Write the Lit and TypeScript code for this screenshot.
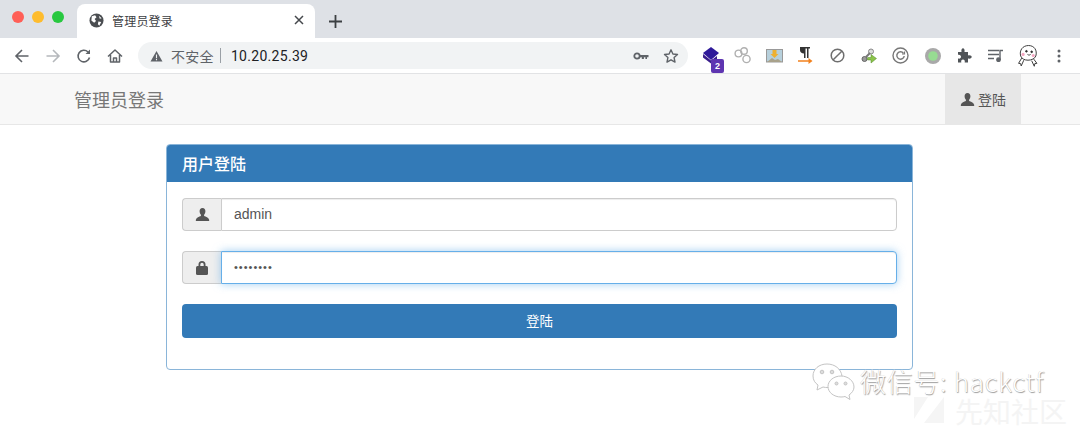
import { LitElement, html, css, svg } from "lit";
import { customElement } from "lit/decorators.js";

const person = svg`<path d="M8 1C5.900 1 4.900 2.600 4.900 4.600c0 1.500.6 2.800 1.400 3.600v1.300C4.500 10.400 1.600 11 .9 13.600V15h14.200v-1.400c-.7-2.600-3.600-3.200-5.400-4.100V8.200c.8-.8 1.400-2.100 1.400-3.600C11.100 2.600 10.100 1 8 1z"/>`;

@customElement("app-root")
export class AppRoot extends LitElement {
  static styles = css`
    :host {
      display: block;
      width: 1080px;
      height: 430px;
      position: relative;
      overflow: hidden;
      background: #fff;
      font-family: "Liberation Sans", "Noto Sans CJK SC", sans-serif;
      color: #555;
    }
    svg { display: block; }
    .tabstrip {
      height: 38px;
      background: #dee1e6;
      display: flex;
      align-items: flex-end;
      box-sizing: border-box;
      padding-left: 12px;
    }
    .lights { display: flex; gap: 8px; align-self: flex-start; margin-top: 11px; width: 64px; }
    .lights i { width: 12px; height: 12px; border-radius: 50%; display: block; }
    .tab {
      width: 238px;
      height: 34px;
      margin-left: 1px;
      box-sizing: border-box;
      background: #fff;
      border-radius: 8px 8px 0 0;
      display: flex;
      align-items: center;
      padding: 0 11px 2px 12px;
      font-size: 12px;
      color: #3c4043;
    }
    .tab .title { margin-left: 8px; flex: 1; font-family: "Noto Sans CJK SC", sans-serif; letter-spacing: 0.2px; }
    .plus { margin: 0 0 10px 14px; }
    .toolbar {
      background: #fff;
      display: flex;
      align-items: center;
      box-sizing: border-box;
      padding-left: 14px;
      border-bottom: 1px solid #e2e3e5;
      height: 36px;
    }
    .nav { display: flex; gap: 15px; align-items: center; width: 124px; }
    .omni {
      width: 550px;
      height: 27px;
      margin-right: 7px;
      border-radius: 14px;
      background: #f1f3f4;
      display: flex;
      align-items: center;
      padding-left: 12px;
      box-sizing: border-box;
    }
    .insecure { margin-left: 8px; font: 14px "Noto Sans CJK SC", sans-serif; color: #5f6368; letter-spacing: 0.3px; }
    .sep { width: 1px; height: 15px; background: #9aa0a6; margin: 0 10px 0 6px; }
    .url { font: 14px Roboto, sans-serif; color: #202124; letter-spacing: 0.3px; flex: 1; }
    .omni .key { margin-right: 14px; }
    .omni .star { margin-right: 9px; }
    .exts { display: flex; align-items: center; }
    .ext { width: 31.7px; display: flex; justify-content: center; align-items: center; position: relative; }
    .badge {
      position: absolute;
      left: 16px;
      top: 12px;
      width: 13px;
      height: 14px;
      border-radius: 2px;
      background: #5e35b1;
      color: #fff;
      font: bold 9px/14px "Liberation Sans", sans-serif;
      text-align: center;
    }
    .navbar {
      height: 51px;
      box-sizing: border-box;
      background: #f8f8f8;
      border-bottom: 1px solid #e7e7e7;
      display: flex;
      justify-content: space-between;
      padding: 0 59px 0 74px;
    }
    .brand { font: 18px/50px "Noto Sans CJK SC", sans-serif; color: #777; }
    .login-tab {
      width: 76px;
      background: #e7e7e7;
      display: flex;
      align-items: center;
      justify-content: center;
      gap: 3px;
      font: 14px "Noto Sans CJK SC", sans-serif;
      color: #555;
    }
    .main { padding: 19px 0 0 166px; }
    .panel {
      width: 747px;
      height: 226px;
      box-sizing: border-box;
      border: 1px solid #8ab5d9;
      border-radius: 4px;
      background: #fff;
    }
    .panel-head {
      height: 37px;
      background: #337ab7;
      color: #fff;
      font: 500 16px/36px "Noto Sans CJK SC", sans-serif;
      padding-left: 15px;
      border-radius: 3px 3px 0 0;
    }
    .panel-body { padding: 16px 15px 15px; display: flex; flex-direction: column; }
    .group { display: flex; height: 33px; margin-bottom: 20px; }
    .addon {
      width: 39px;
      box-sizing: border-box;
      background: #eee;
      border: 1px solid #ccc;
      border-right: 0;
      border-radius: 4px 0 0 4px;
      display: flex;
      align-items: center;
      justify-content: center;
    }
    .field {
      flex: 1;
      box-sizing: border-box;
      border: 1px solid #ccc;
      border-radius: 0 4px 4px 0;
      background: #fff;
      font: 14px/31px "Liberation Sans", sans-serif;
      padding-left: 12px;
      color: #555;
      box-shadow: inset 0 1px 1px rgba(0,0,0,.075);
    }
    .field.focus {
      border-color: #66afe9;
      box-shadow: inset 0 1px 1px rgba(0,0,0,.075), 0 0 8px rgba(102,175,233,.6);
      font-size: 11px;
      letter-spacing: 1px;
    }
    .btn {
      height: 34px;
      background: #337ab7;
      border-radius: 4px;
      color: #fff;
      font: 13.5px/33px "Noto Sans CJK SC", sans-serif;
      text-align: center;
    }
    .wm-bubbles { position: absolute; left: 812px; top: 362px; }
    .wm-text {
      position: absolute;
      left: 860px;
      top: 366px;
      font: 300 26px/30px "Noto Sans CJK SC", "Liberation Sans", sans-serif;
      color: #fff;
      letter-spacing: 0.7px;
      text-shadow: 0.7px 0.7px 1px #9a9a9a, -0.3px -0.3px 0.5px #c8c8c8;
      white-space: nowrap;
    }
    .wm-logo { position: absolute; left: 914px; top: 397px; }
    .wm-site {
      position: absolute;
      left: 955px;
      top: 397px;
      font: 28px/28px "Noto Sans CJK SC", sans-serif;
      color: #f4f4f4;
      white-space: nowrap;
    }
  `;

  render() {
    const arrow = (c: string, flip: boolean) => html`<svg width="16" height="16" viewBox="0 0 16 16" fill="none" stroke=${c} stroke-width="1.6" style=${flip ? "transform:scaleX(-1)" : ""}><path d="M14.500 8H2M8 2 2 8l6 6"/></svg>`;
    return html`
      <div class="tabstrip">
        <div class="lights">
          <i style="background:#ff5f57"></i><i style="background:#febc2e"></i><i style="background:#28c840"></i>
        </div>
        <div class="tab">
          <svg width="15" height="15" viewBox="0 0 16 16"><circle cx="8" cy="8" r="7.500" fill="#4a4d51"/><path d="M3 3.500 6.500 2.500 8 4.500 6 6.500 7.500 8.500 5.500 10.500 2.500 8zM10 9l3 .5-2 4-1.500-1.500zM10.500 3l3 2.500-2 .5z" fill="#fff"/></svg>
          <span class="title">管理员登录</span>
          <svg width="10" height="10" viewBox="0 0 10 10" stroke="#45484c" stroke-width="1.500"><path d="M1 1l8 8M9 1l-8 8"/></svg>
        </div>
        <svg class="plus" width="13" height="13" viewBox="0 0 13 13" stroke="#3c4043" stroke-width="1.800"><path d="M6.500 0v13M0 6.500h13"/></svg>
      </div>
      <div class="toolbar">
        <div class="nav">
          ${arrow("#5f6368", false)}
          ${arrow("#b5b8bc", true)}
          <svg width="16" height="16" viewBox="0 0 16 16" fill="none" stroke="#5f6368" stroke-width="1.600"><path d="M13.500 9.500A5.800 5.800 0 1 1 12 4"/><path d="M14 1.500v4.500H9.500z" fill="#5f6368" stroke="none"/></svg>
          <svg width="16" height="16" viewBox="0 0 16 16" fill="none" stroke="#5f6368" stroke-width="1.500"><path d="M1 8.500 8 2l7 6.500M3.500 7v7h9V7M6.500 14v-4h3v4" stroke-linejoin="round"/></svg>
        </div>
        <div class="omni">
          <svg width="13" height="12" viewBox="0 0 14 13"><path d="M7 1 13.500 12.500H.5z" fill="#5f6368"/><path d="M6.400 5h1.200v4H6.400zM6.400 9.800h1.200v1.200H6.400z" fill="#f1f3f4"/></svg>
          <span class="insecure">不安全</span>
          <span class="sep"></span>
          <span class="url">10.20.25.39</span>
          <svg class="key" width="16" height="10" viewBox="0 0 16 10" fill="none"><circle cx="4" cy="5" r="2.700" stroke="#5f6368" stroke-width="1.800"/><path d="M6.500 4h9v2.200h-1.500V8h-1.600V6.200h-1.500V8H8.800V6.200H6.500z" fill="#5f6368"/></svg>
          <svg class="star" width="16" height="16" viewBox="0 0 16 16" fill="none" stroke="#5f6368" stroke-width="1.400"><path d="M8 1.800 9.900 6l4.600.5-3.400 3.100.9 4.500L8 11.800l-4 2.300.9-4.500L1.500 6.500 6.100 6z" stroke-linejoin="round"/></svg>
        </div>
        <div class="exts">
          <div class="ext">
            <svg width="18" height="18" viewBox="0 0 18 18"><path d="M9 0l8 6-8 7-8-7z" fill="#2f1a9a"/><path d="M1 7l8 6.500L15 9v4l-6 3.500-8-6z" fill="#3a1e8c"/></svg>
            <span class="badge">2</span>
          </div>
          <div class="ext"><svg width="18" height="17" viewBox="0 0 18 17" fill="none" stroke="#b0b0b0" stroke-width="1.400"><circle cx="4.500" cy="6.500" r="3.400"/><circle cx="10" cy="4" r="3.300"/><circle cx="12.500" cy="12" r="3.600"/></svg></div>
          <div class="ext"><svg width="17" height="14" viewBox="0 0 17 14"><rect x=".5" y=".5" width="16" height="12.500" fill="#b7d0dc" stroke="#999"/><path d="M1 13l5-4 3 2 3-1 4 3z" fill="#a9a28b"/><path d="M6.500 1h4v4h2l-4 4-4-4h2z" fill="#eeb030"/></svg></div>
          <div class="ext"><svg width="15" height="17" viewBox="0 0 15 17"><path d="M2 0h10v1.500h-1.500V11H9V1.500H7.500V11H6V6.500C3.500 6.500 2 5 2 3.200z" fill="#333"/><path d="M0 14h11" stroke="#f2811d" stroke-width="1.500"/><path d="M10.500 11 14.500 14l-4 3z" fill="#f2811d"/></svg></div>
          <div class="ext"><svg width="15" height="15" viewBox="0 0 15 15" fill="none" stroke="#6e6e6e" stroke-width="1.500"><circle cx="7.500" cy="7.500" r="6.300"/><path d="M3.200 11.800 11.800 3.200"/></svg></div>
          <div class="ext"><svg width="16" height="16" viewBox="0 0 16 16" fill="none"><circle cx="3.500" cy="11" r="2.500" fill="#999" stroke="#666" stroke-width="1"/><circle cx="10" cy="3.500" r="2.500" fill="#ddd" stroke="#888" stroke-width="1"/><path d="M5 9l4-4" stroke="#777" stroke-width="2"/><path d="M6.500 9.500h3.500V6.500L15.500 10.500l-5.500 4.500v-3H6.500z" fill="#8bc34a" stroke="#558b2f" stroke-width=".5"/></svg></div>
          <div class="ext"><svg width="17" height="17" viewBox="0 0 17 17" fill="none" stroke="#777" stroke-width="1.400"><circle cx="8.500" cy="8.500" r="7.500"/><path d="M11.500 6.300A3.700 3.700 0 1 0 12.200 9"/><path d="M12.500 4.500v2.500H10" stroke-width="1.200"/></svg></div>
          <div class="ext"><svg width="16" height="16" viewBox="0 0 16 16"><circle cx="8" cy="8" r="8" fill="#a9a9a9"/><circle cx="8" cy="8" r="4.800" fill="#97dc92"/></svg></div>
          <div class="ext"><svg width="15" height="15" viewBox="0 0 15 15"><path d="M1 4h3.500C4 1.500 5 .3 6 .3S8 1.500 7.500 4H11v3.500c2.500-.5 3.700.5 3.700 1.500s-1.200 2-3.700 1.500V14.500H7.700c.5-2-.4-3-1.700-3s-2.200 1-1.700 3H1v-4c2 .5 3-.4 3-1.700S3 6.300 1 6.800z" fill="#4f5357"/></svg></div>
          <div class="ext"><svg width="16" height="13" viewBox="0 0 16 13" fill="none" stroke="#5f6368" stroke-width="1.400"><path d="M0 1.500h11M0 5.500h11M0 9.500h6"/><path d="M12 11V1.500h3"/><circle cx="10.500" cy="10.700" r="1.700" fill="#5f6368"/></svg></div>
          <div class="ext"><svg width="22" height="24" viewBox="0 0 21 22" fill="none" stroke="#333" stroke-width=".9"><path d="M3.500 11C2 5.500 5.500 1 11 1s8.500 4.500 7 10c-1 2.500-4 4-7.500 4s-6-1.500-7-4z" fill="#fff"/><circle cx="9" cy="6.500" r=".8" fill="#222"/><circle cx="14" cy="7" r=".8" fill="#222"/><path d="M10 9.500c1 .8 2 .8 3 0"/><circle cx="5.800" cy="9.500" r="1.500" fill="#f4a6c0" stroke="none"/><circle cx="15.500" cy="10.500" r="1.500" fill="#f4a6c0" stroke="none"/><path d="M4.500 13 1.500 18l2 .3.5 2.200L6.500 15M16 14l3 4-2 .3-.5 2.500L14 15.500"/></svg></div>
          <div class="ext"><svg width="4" height="14" viewBox="0 0 4 14" fill="#5f6368"><circle cx="2" cy="2" r="1.500"/><circle cx="2" cy="7" r="1.500"/><circle cx="2" cy="12" r="1.500"/></svg></div>
        </div>
      </div>
      <div class="navbar">
        <div class="brand">管理员登录</div>
        <div class="login-tab">
          <svg width="15" height="15" viewBox="0 0 16 16" fill="#555">${person}</svg>
          <span>登陆</span>
        </div>
      </div>
      <div class="main">
        <div class="panel">
          <div class="panel-head">用户登陆</div>
          <div class="panel-body">
            <div class="group">
              <div class="addon"><svg width="15" height="15" viewBox="0 0 16 16" fill="#555">${person}</svg></div>
              <div class="field">admin</div>
            </div>
            <div class="group">
              <div class="addon"><svg width="14" height="15" viewBox="0 0 14 15" fill="#555"><path d="M3.500 6.500V4.500a3.500 3.500 0 0 1 7 0v2h-1.800v-2a1.700 1.700 0 0 0-3.400 0v2z"/><rect x="1" y="6" width="12" height="9" rx="1.500"/></svg></div>
              <div class="field focus">••••••••</div>
            </div>
            <div class="btn">登陆</div>
          </div>
        </div>
      </div>
      <svg class="wm-bubbles" width="44" height="38" viewBox="0 0 44 38" fill="#fff" stroke="#c4c4c4" stroke-width="1"><path d="M15 2C7 2 1 7 1 14c0 4 2 7 5 9l-1 5 6-3c2 .5 3 .5 5 .5C26 26 30 20 30 14 29 7 23 2 15 2z"/><path d="M29 14c-7 0-13 4.500-13 10.500S22 35 29 35c1.500 0 3-.2 4-.5l5 3-1-4.500c3-2 5-5 5-8 0-6-6-11-13-11z"/><circle cx="10" cy="10" r="1.800" fill="#ddd"/><circle cx="20" cy="10" r="1.800" fill="#ddd"/><circle cx="24.500" cy="21.500" r="1.500" fill="#ddd"/><circle cx="33.500" cy="21.500" r="1.500" fill="#ddd"/></svg>
      <div class="wm-text">微信号: hackctf</div>
      <svg class="wm-logo" width="30" height="31" viewBox="0 0 30 31"><path d="M0 0h14L0 22zM30 0v26H10z" fill="#f5f5f5"/></svg>
      <div class="wm-site">先知社区</div>
    `;
  }
}
